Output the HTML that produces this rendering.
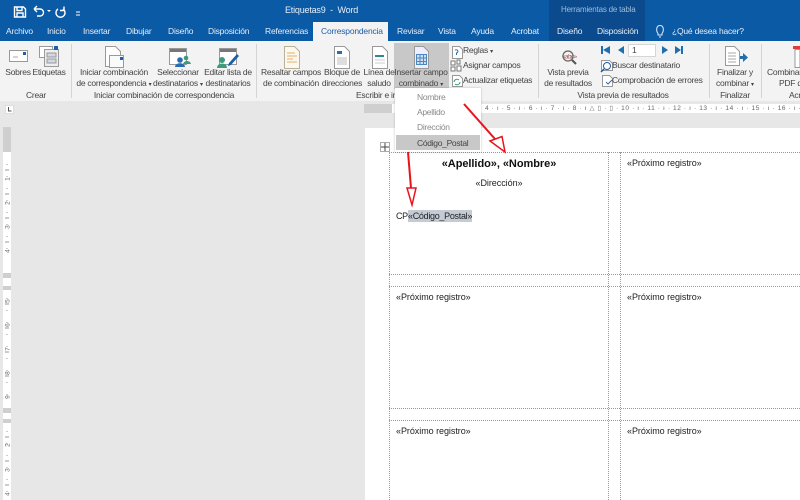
<!DOCTYPE html>
<html lang="es"><head><meta charset="utf-8"><title>Etiquetas9 - Word</title>
<style>
html,body{margin:0;padding:0;width:800px;height:500px;overflow:hidden;background:#e7e7e7}
body{position:relative;font-family:"Liberation Sans",sans-serif;color:#444}
div,span,svg{position:absolute}
.t{white-space:nowrap;font-size:8.5px;line-height:11px;color:#444;letter-spacing:-.25px}
.t i{font-style:normal;font-size:6px;letter-spacing:0;position:static}
.c{transform:translateX(-50%);text-align:center}
.w{color:#e6eef7;font-size:8.5px;line-height:12px;white-space:nowrap;letter-spacing:-.2px}
.sep{width:1px;background:#d4d4d4;top:44px;height:54px}
.d{color:#222;font-size:9px;line-height:11px;white-space:nowrap;font-family:"Liberation Sans",sans-serif;letter-spacing:-.05px}
.hl{border-top:1px dotted #999;height:0;left:389px;width:411px}
.vl{border-left:1px dotted #999;width:0;top:152px;height:348px}
.m{color:#8a8a8a;font-size:8.5px;line-height:11px;white-space:nowrap;letter-spacing:-.3px}
</style></head><body>
<div style="left:0;top:0;width:800px;height:41px;background:#0a5aa6"></div>
<div style="left:549px;top:0;width:96px;height:41px;background:#0b4a8c"></div>
<div style="left:0;top:41px;width:800px;height:60px;background:#f3f3f3"></div>
<div style="left:313px;top:22px;width:75px;height:20px;background:#f3f3f3"></div>

<!-- QAT -->
<svg style="left:12px;top:2px" width="75" height="17" viewBox="0 0 75 17" fill="none" stroke="#fff" stroke-width="1.4"><path d="M2.500 5h9l2 2v8h-11zM5 5v3.500h5V5M5 15v-4h6v4"/><path d="M22 7h6a3.500 3.500 0 0 1 0 7h-3M22 7l3-3M22 7l3 3"/><path d="M35 8l4 0-2 2z" fill="#fff" stroke="none"/><path d="M46 7a4.500 4.500 0 1 0 5 0M52 4.500v4h-4"/><path d="M64 10h4M64 13h4" stroke-width="1"/></svg>
<div class="w" style="left:285px;top:4px;font-size:9px">Etiquetas9 &nbsp;-&nbsp; Word</div>
<div class="w" style="left:561px;top:4px;color:#9fbcdc;font-size:8px">Herramientas de tabla</div>

<!-- Tabs -->
<div class="w" style="left:6px;top:25px">Archivo</div>
<div class="w" style="left:47px;top:25px">Inicio</div>
<div class="w" style="left:83px;top:25px">Insertar</div>
<div class="w" style="left:126px;top:25px">Dibujar</div>
<div class="w" style="left:168px;top:25px">Diseño</div>
<div class="w" style="left:208px;top:25px">Disposición</div>
<div class="w" style="left:265px;top:25px">Referencias</div>
<div class="w" style="left:321px;top:25px;color:#1f5fa6">Correspondencia</div>
<div class="w" style="left:397px;top:25px">Revisar</div>
<div class="w" style="left:438px;top:25px">Vista</div>
<div class="w" style="left:471px;top:25px">Ayuda</div>
<div class="w" style="left:511px;top:25px">Acrobat</div>
<div class="w" style="left:557px;top:25px">Diseño</div>
<div class="w" style="left:597px;top:25px">Disposición</div>
<svg style="left:654px;top:24px" width="12" height="14" viewBox="0 0 12 14" fill="none" stroke="#e6eef7"><path d="M4 9.500C2 7 2 1.500 6 1.500S10 7 8 9.500V11H4zM5 13h2"/></svg>
<div class="w" style="left:672px;top:25px">¿Qué desea hacer?</div>

<!-- hover button -->
<div style="left:394px;top:43px;width:55px;height:46px;background:#c8c8c8"></div>

<!-- separators -->
<div class="sep" style="left:71px"></div>
<div class="sep" style="left:256px"></div>
<div class="sep" style="left:538px"></div>
<div class="sep" style="left:709px"></div>
<div class="sep" style="left:761px"></div>

<!-- Ribbon icons -->
<svg style="left:0;top:41px" width="800" height="50" viewBox="0 0 800 50" fill="#fff" stroke="#999" stroke-width="1">
<path d="M9.500 9.500h18v11h-18z"/><path d="M23 11h3v3h-3z" fill="#1d5fa8" stroke="none"/><path d="M13 16h5" stroke="#aaa"/>
<path d="M39.500 5.500h13v11h-13z"/><path d="M44.500 8.500h14v17h-14z" fill="#eee"/><path d="M47 12h9v4h-9zM47 18h9v4h-9z" fill="#cfd8e3"/><path d="M54 5h4v4h-4z" fill="#1d5fa8" stroke="none"/>
<path d="M105.500 5.500h10l5 5v15h-15z"/><path d="M109.500 14.500h14v12h-14z" fill="#fafafa"/><path d="M120 16h3v3h-3z" fill="#1d5fa8" stroke="none"/>
<path d="M169.500 7.500h17v16h-17z"/><path d="M170 8h16v3h-16z" fill="#777" stroke="none"/><circle cx="180" cy="19" r="2.800" fill="#2a6cb0" stroke="none"/><path d="M175 26c0-5 10-5 10 0z" fill="#2a6cb0" stroke="none"/><circle cx="186" cy="17" r="2.300" fill="#3d9b7d" stroke="none"/><path d="M183 23c1-4 7-4 8 0z" fill="#3d9b7d" stroke="none"/>
<path d="M219.500 7.500h17v16h-17z"/><path d="M220 8h16v3h-16z" fill="#777" stroke="none"/><circle cx="222" cy="19" r="3" fill="#3d9b7d" stroke="none"/><path d="M217 27c0-6 10-6 10 0z" fill="#3d9b7d" stroke="none"/><path d="M229 22l8-9 2 2-8 9-3 1z" fill="#1d5fa8" stroke="none"/>
<path d="M284.500 5.500h10l5 5v17h-15z" fill="#fdf8ee" stroke="#b8b098"/><path d="M287 12h8M287 15h10M287 18h6M287 21h10" stroke="#e3b26b"/>
<path d="M334.500 5.500h10l5 5v17h-15z"/><path d="M337 10h5v3h-5z" fill="#2a6cb0" stroke="none"/><path d="M337 16h10v8h-10z" fill="#ddd" stroke="none"/>
<path d="M372.500 5.500h10l5 5v17h-15z"/><path d="M375 14h9v2h-9z" fill="#2a8a90" stroke="none"/><path d="M375 19h10M375 22h10" stroke="#ccc"/>
<path d="M414.500 5.500h9l5 5v17h-14z" fill="#eef"/><path d="M416.500 13.500h10v10h-10zM416.500 17h10M416.500 20.500h10M420 13v11M423.500 13v11" stroke="#4d86c0" fill="#cfe0f2"/>
<path d="M452.500 5.500h7l3 3v9h-10z"/><path d="M455 9c3-1 4 2 1.500 3v2" stroke="#2a6cb0" fill="none"/>
<path d="M451 20h4v4h-4zM457 19h3v4h-3zM457 25h4v5h-4zM451 26h4v4h-4z" fill="#fff" stroke="#777"/>
<path d="M452.500 34.500h7l3 3v8h-10z"/><path d="M454 41a3 3 0 0 1 5-2M460 41a3 3 0 0 1-5 2" stroke="#3d9b7d" fill="none"/>
<text x="562" y="17.500" font-size="6" fill="#a04040" stroke="none" font-family="Liberation Sans" letter-spacing="-.3">«abc»</text><circle cx="568" cy="15" r="5" fill="none" stroke="#666" stroke-width="1.300"/><path d="M572 19l4 4" stroke="#555" stroke-width="2"/>
<path d="M602 5v8" stroke="#1d6fb0" stroke-width="2"/><path d="M610 5v8l-7-4zM624 5v8l-6-4zM662 5v8l6-4zM675 5v8l6-4z" fill="#1d6fb0" stroke="none"/><path d="M682 5v8" stroke="#1d6fb0" stroke-width="2"/>
<path d="M628.500 3.500h27v12h-27z" stroke="#d6d6d6"/>
<path d="M601.500 19.500h8l3 3v7h-11z"/><circle cx="607" cy="25" r="3.500" stroke="#1d5fa8" fill="#fff"/><path d="M604 28l-3 3" stroke="#1d5fa8" stroke-width="1.500"/>
<path d="M602.500 34.500h7l3 3v8h-10z"/><path d="M606 41l2 2 4-4" stroke="#2a6cb0" fill="none"/>
<path d="M725.500 5.500h9l5 5v14h-14z"/><path d="M728 12h8M728 15h8M728 18h8M728 21h8" stroke="#aaa"/><path d="M740 15h3v-3l5 4.500-5 4.500v-3h-3z" fill="#1d6fb0" stroke="none"/>
<path d="M793 5h7v3h-7z" fill="#e23a3a" stroke="none"/><path d="M795 8.500h5v18h-5z"/>
</svg>

<!-- Ribbon labels -->
<div class="t c" style="left:18px;top:67px">Sobres</div>
<div class="t c" style="left:49px;top:67px">Etiquetas</div>
<div class="t c" style="left:36px;top:90px">Crear</div>
<div class="t c" style="left:114px;top:67px">Iniciar combinación</div>
<div class="t c" style="left:114px;top:78px">de correspondencia <i>▾</i></div>
<div class="t c" style="left:178px;top:67px">Seleccionar</div>
<div class="t c" style="left:178px;top:78px">destinatarios <i>▾</i></div>
<div class="t c" style="left:228px;top:67px">Editar lista de</div>
<div class="t c" style="left:228px;top:78px">destinatarios</div>
<div class="t c" style="left:164px;top:90px">Iniciar combinación de correspondencia</div>
<div class="t c" style="left:291px;top:67px">Resaltar campos</div>
<div class="t c" style="left:291px;top:78px">de combinación</div>
<div class="t c" style="left:342px;top:67px">Bloque de</div>
<div class="t c" style="left:342px;top:78px">direcciones</div>
<div class="t c" style="left:379px;top:67px">Línea de</div>
<div class="t c" style="left:379px;top:78px">saludo</div>
<div class="t" style="left:356px;top:90px">Escribir e in</div>
<div class="t c" style="left:421px;top:67px">Insertar campo</div>
<div class="t c" style="left:421px;top:78px">combinado <i>▾</i></div>
<div class="t" style="left:463px;top:45px">Reglas <i>▾</i></div>
<div class="t" style="left:463px;top:60px">Asignar campos</div>
<div class="t" style="left:463px;top:75px">Actualizar etiquetas</div>
<div class="t c" style="left:568px;top:67px">Vista previa</div>
<div class="t c" style="left:568px;top:78px">de resultados</div>
<div class="t c" style="left:623px;top:90px">Vista previa de resultados</div>
<div class="t" style="left:632px;top:45px">1</div>
<div class="t" style="left:612px;top:60px">Buscar destinatario</div>
<div class="t" style="left:612px;top:75px">Comprobación de errores</div>
<div class="t c" style="left:735px;top:67px">Finalizar y</div>
<div class="t c" style="left:735px;top:78px">combinar <i>▾</i></div>
<div class="t c" style="left:735px;top:90px">Finalizar</div>
<div class="t" style="left:767px;top:67px">Combinar</div>
<div class="t" style="left:779px;top:78px">PDF d</div>
<div class="t" style="left:789px;top:90px">Acr</div>

<!-- Horizontal ruler -->
<div style="left:5px;top:105px;width:9px;height:9px;background:#fff;border:1px solid #ddd;box-sizing:border-box"></div>
<svg style="left:5px;top:105px" width="9" height="9" viewBox="0 0 9 9" fill="none" stroke="#555"><path d="M3.500 2v4h3"/></svg>
<div style="left:389px;top:104px;width:411px;height:9px;background:#fff"></div>
<div style="left:364px;top:104px;width:28px;height:9px;background:#cfcfcf"></div>
<div class="t" style="left:485px;top:103px;font-size:6.5px;color:#666;letter-spacing:.62px">4 · ı · 5 · ı · 6 · ı · 7 · ı · 8 · ı △ ▯ · ▯ · 10 · ı · 11 · ı · 12 · ı · 13 · ı · 14 · ı · 15 · ı · 16 · ı ·</div>

<!-- Vertical ruler -->
<div style="left:3px;top:127px;width:8px;height:373px;background:#fff"></div>
<div style="left:3px;top:127px;width:8px;height:25px;background:#cfcfcf"></div>
<div style="left:3px;top:273px;width:8px;height:5px;background:#cfcfcf"></div>
<div style="left:3px;top:286px;width:8px;height:4px;background:#cfcfcf"></div>
<div style="left:3px;top:408px;width:8px;height:5px;background:#cfcfcf"></div>
<div style="left:3px;top:419px;width:8px;height:4px;background:#cfcfcf"></div>
<svg style="left:3px;top:127px" width="8" height="373" viewBox="0 0 8 373" stroke="#999" fill="none" stroke-width="1"><path d="M4 37v1M2 43h4M4 49v1M4 61v1M2 67h4M4 73v1M4 85v1M2 91h4M4 97v1M4 109v1M2 115h4M4 121v1M4 171v1M2 177h4M4 183v1M4 195v1M2 201h4M4 207v1M4 219v1M2 225h4M4 231v1M4 243v1M2 249h4M4 255v1M4 267v1M4 304v1M2 310h4M4 316v1M4 328v1M2 334h4M4 340v1M4 352v1M2 358h4M4 364v1"/>
<g fill="#666" stroke="none" font-family="Liberation Sans" font-size="6.500" text-anchor="middle"><text transform="translate(6.500,52) rotate(-90)">1</text><text transform="translate(6.500,76) rotate(-90)">2</text><text transform="translate(6.500,100) rotate(-90)">3</text><text transform="translate(6.500,124) rotate(-90)">4</text><text transform="translate(6.500,174) rotate(-90)">5</text><text transform="translate(6.500,198) rotate(-90)">6</text><text transform="translate(6.500,222) rotate(-90)">7</text><text transform="translate(6.500,246) rotate(-90)">8</text><text transform="translate(6.500,270) rotate(-90)">9</text><text transform="translate(6.500,318) rotate(-90)">2</text><text transform="translate(6.500,343) rotate(-90)">3</text><text transform="translate(6.500,367) rotate(-90)">4</text></g></svg>

<!-- Page -->
<div style="left:365px;top:128px;width:435px;height:372px;background:#fff"></div>

<!-- Table gridlines -->
<div class="hl" style="top:152px"></div>
<div class="hl" style="top:274px"></div>
<div class="hl" style="top:286px"></div>
<div class="hl" style="top:408px"></div>
<div class="hl" style="top:420px"></div>
<div class="vl" style="left:389px"></div>
<div class="vl" style="left:608px"></div>
<div class="vl" style="left:620px"></div>

<!-- Table handle -->
<div style="left:380px;top:142px;width:10px;height:10px;background:#fff;border:1px solid #aaa;box-sizing:border-box"></div>
<svg style="left:381px;top:143px" width="9" height="9" viewBox="0 0 9 9" stroke="#444" fill="none"><path d="M4 0v8M0 4h8"/></svg>

<!-- Doc text -->
<div class="d" style="left:499px;top:158px;transform:translateX(-50%);font-weight:bold;font-size:11px;line-height:13px;color:#111">«Apellido», «Nombre»</div>
<div class="d" style="left:499px;top:178px;transform:translateX(-50%)">«Dirección»</div>
<div class="d" style="left:396px;top:211px;letter-spacing:-.4px">CP</div>
<div style="left:408px;top:210px;width:64px;height:12px;background:#c4cbd4"></div>
<div class="d" style="left:408px;top:211px;letter-spacing:-.3px">«Código_Postal»</div>
<div class="d" style="left:627px;top:158px">«Próximo registro»</div>
<div class="d" style="left:396px;top:292px">«Próximo registro»</div>
<div class="d" style="left:627px;top:292px">«Próximo registro»</div>
<div class="d" style="left:396px;top:426px">«Próximo registro»</div>
<div class="d" style="left:627px;top:426px">«Próximo registro»</div>

<!-- Dropdown -->
<div style="left:395px;top:88px;width:86px;height:64px;background:#fff;box-shadow:0 0 2px rgba(0,0,0,.25)">
  <div style="left:1px;top:47px;width:84px;height:15px;background:#c8c8c8"></div>
  <div class="m" style="left:22px;top:4px">Nombre</div>
  <div class="m" style="left:22px;top:19px">Apellido</div>
  <div class="m" style="left:22px;top:34px">Dirección</div>
  <div class="m" style="left:22px;top:50px;color:#444">Código_Postal</div>
</div>

<!-- Arrows -->
<svg style="left:0;top:0" width="800" height="500" viewBox="0 0 800 500" fill="none" stroke="#e8141c">
<path d="M464 104L495 139" stroke-width="2"/><path d="M490 141L502 136.500L505 152z" fill="#fff" stroke-width="1.500"/>
<path d="M408 152L411 188" stroke-width="2"/><path d="M407 188h9l-4 17z" fill="#fff" stroke-width="1.500"/>
</svg>
</body></html>
